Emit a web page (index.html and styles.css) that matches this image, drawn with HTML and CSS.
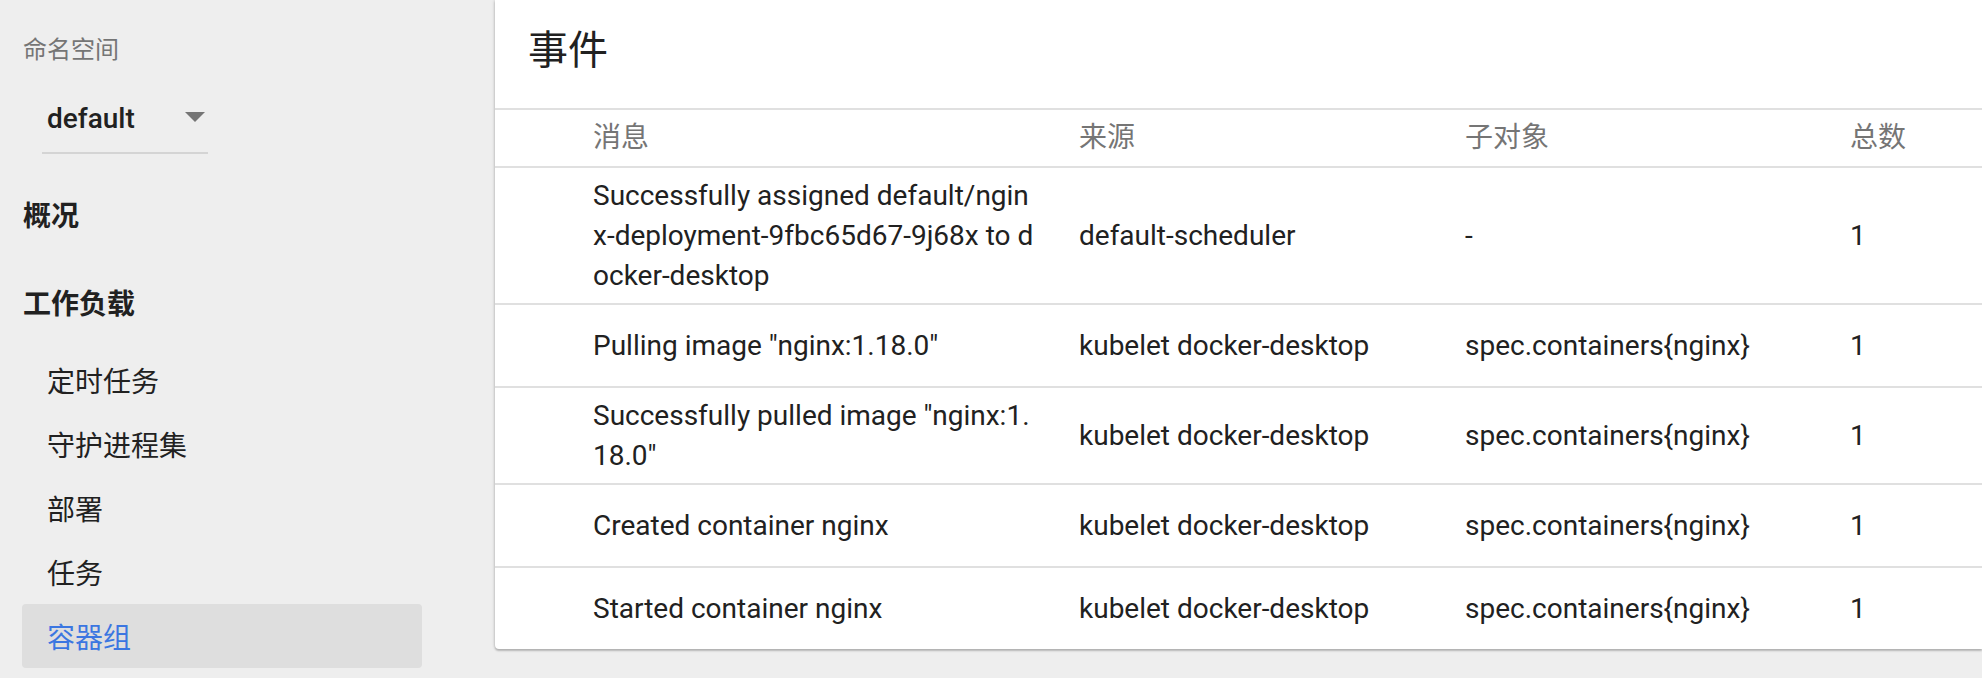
FILE: index.html
```html
<!DOCTYPE html>
<html lang="zh">
<head>
<meta charset="utf-8">
<title>事件</title>
<link rel="stylesheet" href="styles.css">
</head>
<body>
<nav class="sidebar">
  <div class="ns-label">命名空间</div>
  <div class="ns-select">
    <span class="ns-value">default</span>
    <span class="ns-arrow"></span>
  </div>
  <div class="nav-heading first">概况</div>
  <div class="nav-heading second">工作负载</div>
  <ul class="nav-list">
    <li class="nav-item">定时任务</li>
    <li class="nav-item">守护进程集</li>
    <li class="nav-item">部署</li>
    <li class="nav-item">任务</li>
    <li class="nav-item active">容器组</li>
  </ul>
</nav>
<main class="main">
  <section class="card">
    <h2 class="card-title">事件</h2>
    <div class="table">
      <div class="row head">
        <div class="cell lead"></div>
        <div class="cell msg">消息</div>
        <div class="cell">来源</div>
        <div class="cell">子对象</div>
        <div class="cell">总数</div>
      </div>
      <div class="row">
        <div class="cell lead"></div>
        <div class="cell msg">Successfully assigned default/nginx-deployment-9fbc65d67-9j68x to docker-desktop</div>
        <div class="cell">default-scheduler</div>
        <div class="cell">-</div>
        <div class="cell">1</div>
      </div>
      <div class="row">
        <div class="cell lead"></div>
        <div class="cell msg">Pulling image "nginx:1.18.0"</div>
        <div class="cell">kubelet docker-desktop</div>
        <div class="cell">spec.containers{nginx}</div>
        <div class="cell">1</div>
      </div>
      <div class="row">
        <div class="cell lead"></div>
        <div class="cell msg">Successfully pulled image "nginx:1.18.0"</div>
        <div class="cell">kubelet docker-desktop</div>
        <div class="cell">spec.containers{nginx}</div>
        <div class="cell">1</div>
      </div>
      <div class="row">
        <div class="cell lead"></div>
        <div class="cell msg">Created container nginx</div>
        <div class="cell">kubelet docker-desktop</div>
        <div class="cell">spec.containers{nginx}</div>
        <div class="cell">1</div>
      </div>
      <div class="row last">
        <div class="cell lead"></div>
        <div class="cell msg">Started container nginx</div>
        <div class="cell">kubelet docker-desktop</div>
        <div class="cell">spec.containers{nginx}</div>
        <div class="cell">1</div>
      </div>
    </div>
  </section>
</main>
</body>
</html>
```

FILE: styles.css
```css
* { box-sizing: border-box; }
html, body {
  margin: 0;
  padding: 0;
  height: 678px;
  overflow: hidden;
}
body {
  background: #eeeeee;
  font-family: Roboto, "Noto Sans CJK SC", "Noto Sans", sans-serif;
  color: #212121;
  display: flex;
  align-items: flex-start;
}

/* Sidebar */
.sidebar {
  width: 495px;
  flex: none;
  padding: 34px 0 0 22px;
  display: flex;
  flex-direction: column;
}
.ns-label {
  font-size: 24px;
  line-height: 32px;
  color: #757575;
  padding-left: 1px;
}
.ns-select {
  margin-top: 33px;
  margin-left: 20px;
  width: 166px;
  height: 55px;
  padding-left: 5px;
  border-bottom: 2px solid #d4d4d4;
  display: flex;
  align-items: flex-start;
  justify-content: space-between;
}
.ns-value {
  font-size: 28px;
  line-height: 40px;
  font-weight: 500;
  color: #212121;
}
.ns-arrow {
  width: 0;
  height: 0;
  margin-top: 13px;
  margin-right: 3px;
  border-left: 10px solid transparent;
  border-right: 10px solid transparent;
  border-top: 10px solid #757575;
}
.nav-heading {
  font-size: 28px;
  line-height: 40px;
  font-weight: 700;
  color: #212121;
  padding-left: 1px;
}
.nav-heading.first { margin-top: 43px; }
.nav-heading.second { margin-top: 48px; }
.nav-list {
  list-style: none;
  margin: 23px 0 0 0;
  padding: 0;
}
.nav-item {
  width: 400px;
  height: 64px;
  padding: 6px 0 0 25px;
  line-height: 58px;
  font-size: 28px;
  color: #212121;
  border-radius: 4px;
}
.nav-item.active {
  background: #dedede;
  color: #3b76e1;
}

/* Main card */
.main {
  flex: 1;
  min-width: 0;
}
.card {
  background: #ffffff;
  border-radius: 0 0 0 4px;
  box-shadow: 0 2px 2px rgba(0,0,0,0.22), -1px 0 3px rgba(0,0,0,0.12);
}
.card-title {
  margin: 0;
  height: 110px;
  padding: 23px 0 0 33px;
  font-size: 40px;
  line-height: 56px;
  font-weight: 400;
  color: #212121;
  border-bottom: 2px solid #e0e0e0;
}
.row {
  display: grid;
  grid-template-columns: 98px 486px 386px 385px 1fr;
  align-items: center;
  min-height: 83px;
  padding: 7.5px 0;
  border-bottom: 2px solid #e0e0e0;
  font-size: 28px;
  line-height: 40px;
  color: #212121;
}
.row.head {
  min-height: 58px;
  height: 58px;
  padding: 0;
  color: #757575;
}
.row.last {
  border-bottom: none;
  min-height: 81px;
}
.cell {
  word-break: break-all;
}
.cell.msg {
  padding-right: 45px;
}
```
